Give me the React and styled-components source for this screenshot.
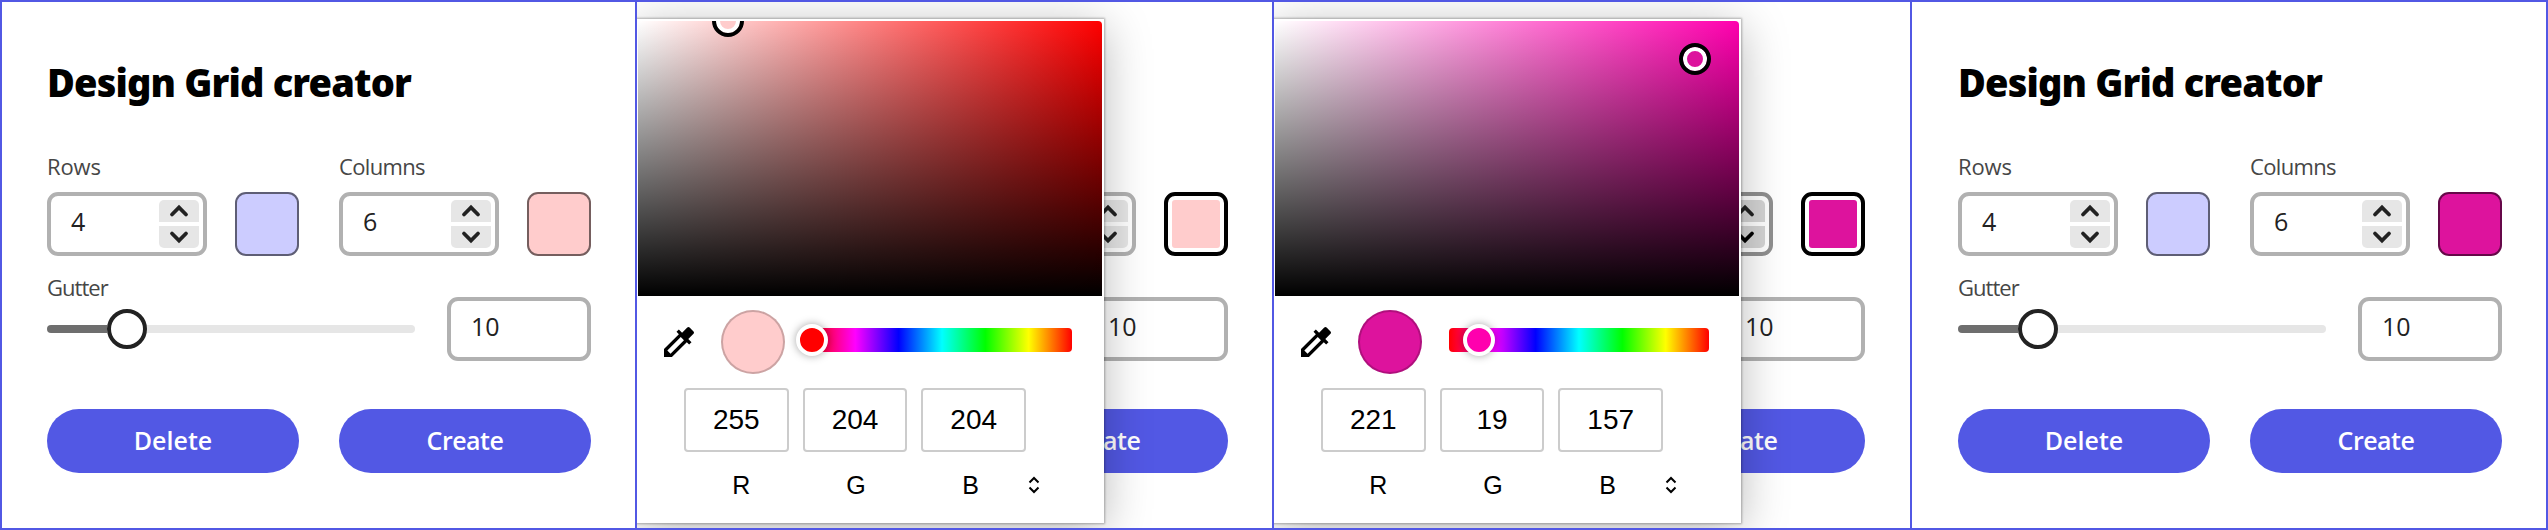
import React from "react";
import styled, { createGlobalStyle } from "styled-components";
import { MdColorize } from "react-icons/md";

const GlobalStyle = createGlobalStyle`
  *, *::before, *::after { box-sizing: border-box; }
  body {
    margin: 0;
    background: #fff;
    font-family: "Open Sans", "Noto Sans", sans-serif;
  }
`;

const Board = styled.main`
  display: grid;
  grid-template-columns: 635px 637px 638px 634px;
  width: 2548px;
  height: 530px;
  border: 2px solid #5258e4;
  background: #fff;
`;

const Panel = styled.section`
  position: relative;
  overflow: hidden;
  padding: 56px 0 0 ${(p) => p.$inset}px;
  border-right: 2px solid #5258e4;

  &:last-child {
    border-right: 0;
  }
`;

const Title = styled.h1`
  margin: 0 0 45px;
  font-family: "Noto Sans", "Open Sans", sans-serif;
  font-size: 38px;
  font-weight: 900;
  letter-spacing: -0.84px;
  line-height: 48px;
  color: #000;
  white-space: nowrap;
`;

const FieldRow = styled.div`
  display: flex;
  gap: 40px;
`;

const Field = styled.div`
  width: 252px;
`;

const Label = styled.div`
  font-size: 22px;
  letter-spacing: ${(p) => p.$tracking || 0}px;
  line-height: 30px;
  color: #464646;
`;

const FieldControls = styled.div`
  display: flex;
  justify-content: space-between;
  margin-top: 11px;
`;

const NumberBox = styled.div`
  display: flex;
  justify-content: space-between;
  align-items: center;
  width: ${(p) => p.$width}px;
  height: 64px;
  padding: 0 4px 0 20px;
  border: 4px solid ${(p) => (p.$hover ? "#909090" : "#b1b1b1")};
  border-radius: 11px;
  background: #fff;
`;

const NumberValue = styled.span`
  padding-bottom: 6px;
  font-size: 25px;
  line-height: 34px;
  color: #222;
`;

const Stepper = styled.div`
  display: flex;
  flex-direction: column;
  gap: 4px;
`;

const StepButton = styled.button`
  display: flex;
  align-items: center;
  justify-content: center;
  width: 40px;
  height: 22px;
  padding: 0;
  border: 0;
  border-radius: ${(p) => (p.$down ? "0 0 5px 5px" : "5px 5px 0 0")};
  background: ${(p) => (p.$hover ? "#d5d5d5" : "#e6e6e6")};
  color: ${(p) => (p.$hover && p.$down ? "#000" : "#222")};
`;

const Swatch = styled.div`
  width: 64px;
  height: 64px;
  border: 2px solid rgba(0, 0, 0, 0.54);
  border-radius: 11px;
  background: ${(p) => p.$color};
`;

const FocusedSwatch = styled.div`
  width: 64px;
  height: 64px;
  padding: 4px;
  border: 4px solid #000;
  border-radius: 11px;
  background: ${(p) => p.$color} content-box;
`;

const GutterRow = styled.div`
  display: flex;
  width: 544px;
  margin-top: 16px;
  justify-content: space-between;
`;

const GutterField = styled.div`
  width: 368px;
`;

const GutterBox = styled.div`
  padding-top: 25px;
`;

const Slider = styled.div`
  display: flex;
  align-items: center;
  height: 40px;
  margin-top: 7px;
`;

const SliderFill = styled.div`
  width: 60px;
  height: 8px;
  border-radius: 4px 0 0 4px;
  background: #6e6e6e;
`;

const SliderThumb = styled.div`
  width: 40px;
  height: 40px;
  border: 4px solid #222;
  border-radius: 50%;
  background: #fff;
`;

const SliderRest = styled.div`
  flex: 1;
  height: 8px;
  border-radius: 0 4px 4px 0;
  background: #e6e6e6;
`;

const Actions = styled.div`
  display: flex;
  gap: 40px;
  margin-top: 48px;
`;

const ActionButton = styled.button`
  width: 252px;
  height: 64px;
  padding: 0 0 2px;
  border: 0;
  border-radius: 32px;
  background: #5258e4;
  color: #fff;
  font-family: inherit;
  font-size: 25px;
  font-weight: 600;
  letter-spacing: ${(p) => p.$tracking || 0}px;
  line-height: 34px;
`;

const Popup = styled.div`
  position: absolute;
  top: 17px;
  left: -1px;
  width: 468px;
  height: 504px;
  padding: 2px;
  background: #fff;
  box-shadow: 0 0 2px 1px rgba(0, 0, 0, 0.28), 0 8px 44px rgba(0, 0, 0, 0.28);
  font-family: "Liberation Sans", Arial, sans-serif;
  color: #000;
`;

const ColorField = styled.div`
  position: relative;
  overflow: hidden;
  height: 275px;
  border-radius: 0 4px 0 0;
  background:
    linear-gradient(to top, #000, rgba(0, 0, 0, 0)),
    linear-gradient(to right, #fff, ${(p) => p.$hue});
`;

const FieldThumb = styled.div`
  position: absolute;
  left: ${(p) => p.$x - 16}px;
  top: ${(p) => p.$y - 16}px;
  width: 32px;
  height: 32px;
  border: 4px solid #000;
  border-radius: 50%;
  background: ${(p) => p.$color};
  box-shadow: inset 0 0 0 4px #fff;
`;

const PickerTools = styled.div`
  display: flex;
  align-items: center;
  gap: 27px;
  padding: 14px 0 14px 26px;
`;

const Dropper = styled.div`
  display: flex;
  align-items: center;
  justify-content: center;
  width: 30px;
  height: 30px;

  svg {
    flex: none;
  }
`;

const Preview = styled.div`
  width: 64px;
  height: 64px;
  border: 2px solid rgba(0, 0, 0, 0.2);
  border-radius: 50%;
  background: ${(p) => p.$color};
`;

const HueTrack = styled.div`
  position: relative;
  width: 260px;
  height: 24px;
  margin-bottom: 4px;
  border-radius: 4px;
  background: linear-gradient(to right, #f00, #f0f, #00f, #0ff, #0f0, #ff0, #f00);
`;

const HueThumb = styled.div`
  position: absolute;
  top: -4px;
  left: ${(p) => p.$x - 16}px;
  width: 32px;
  height: 32px;
  border: 4px solid #fff;
  border-radius: 50%;
  background: ${(p) => p.$hue};
  box-shadow: 0 0 8px rgba(0, 0, 0, 0.35);
`;

const ChannelBoxes = styled.div`
  display: flex;
  gap: 14px;
  width: 388px;
  padding-left: 46px;
`;

const ChannelBox = styled.div`
  flex: 1;
  height: 64px;
  border: 2px solid #ccc;
  border-radius: 4px;
  font-size: 28px;
  line-height: 59px;
  text-align: center;
`;

const ChannelNames = styled.div`
  display: flex;
  align-items: center;
  margin-top: 18px;
  padding-left: 46px;
`;

const ChannelName = styled.span`
  width: 114.67px;
  font-size: 25px;
  line-height: 30px;
  text-align: center;
`;

function Chevron({ down }) {
  return (
    <svg width="22" height="14" viewBox="0 0 22 14" fill="none">
      <path
        d={down ? "M4 3.5 L11 10.5 L18 3.5" : "M4 10.5 L11 3.5 L18 10.5"}
        stroke="currentColor"
        strokeWidth="3.8"
        strokeLinecap="round"
      />
    </svg>
  );
}

function Unfold() {
  return (
    <svg width="12" height="20" viewBox="0 0 12 20" fill="none">
      <path d="M1.5 7.5 L6 3 L10.5 7.5 M1.5 12.5 L6 17 L10.5 12.5" stroke="#000" strokeWidth="2" />
    </svg>
  );
}

function NumberField({ value, hover }) {
  return (
    <NumberBox $width={160} $hover={hover}>
      <NumberValue>{value}</NumberValue>
      <Stepper>
        <StepButton $hover={hover} aria-label="Increase">
          <Chevron />
        </StepButton>
        <StepButton $down $hover={hover} aria-label="Decrease">
          <Chevron down />
        </StepButton>
      </Stepper>
    </NumberBox>
  );
}

function ColorPicker({ rgb, hue, x, y, hueX }) {
  const color = `rgb(${rgb.join(",")})`;
  return (
    <Popup>
      <ColorField $hue={hue}>
        <FieldThumb $x={x} $y={y} $color={color} />
      </ColorField>
      <PickerTools>
        <Dropper>
          <MdColorize size={40} />
        </Dropper>
        <Preview $color={color} />
        <HueTrack>
          <HueThumb $x={hueX} $hue={hue} />
        </HueTrack>
      </PickerTools>
      <ChannelBoxes>
        {rgb.map((v, i) => (
          <ChannelBox key={i}>{v}</ChannelBox>
        ))}
      </ChannelBoxes>
      <ChannelNames>
        <ChannelName>R</ChannelName>
        <ChannelName>G</ChannelName>
        <ChannelName>B</ChannelName>
        <Unfold />
      </ChannelNames>
    </Popup>
  );
}

function GridCreator({ inset, columnColor, focused, hover, picker }) {
  return (
    <Panel $inset={inset}>
      <Title>Design Grid creator</Title>
      <FieldRow>
        <Field>
          <Label $tracking={-0.15}>Rows</Label>
          <FieldControls>
            <NumberField value={4} />
            <Swatch $color="#ccccff" />
          </FieldControls>
        </Field>
        <Field>
          <Label $tracking={-0.65}>Columns</Label>
          <FieldControls>
            <NumberField value={6} hover={hover} />
            {focused ? <FocusedSwatch $color={columnColor} /> : <Swatch $color={columnColor} />}
          </FieldControls>
        </Field>
      </FieldRow>
      <GutterRow>
        <GutterField>
          <Label $tracking={-0.95}>Gutter</Label>
          <Slider>
            <SliderFill />
            <SliderThumb />
            <SliderRest />
          </Slider>
        </GutterField>
        <GutterBox>
          <NumberBox $width={144}>
            <NumberValue>10</NumberValue>
          </NumberBox>
        </GutterBox>
      </GutterRow>
      <Actions>
        <ActionButton>Delete</ActionButton>
        <ActionButton $tracking={-0.5}>Create</ActionButton>
      </Actions>
      {picker && <ColorPicker {...picker} />}
    </Panel>
  );
}

const PINK = "#ffcccc";
const MAGENTA = "#dd139d";

export default function App() {
  return (
    <>
      <GlobalStyle />
      <Board>
        <GridCreator inset={45} columnColor={PINK} />
        <GridCreator
          inset={47}
          columnColor={PINK}
          focused
          picker={{ rgb: [255, 204, 204], hue: "#ff0000", x: 90, y: 0, hueX: 0 }}
        />
        <GridCreator
          inset={47}
          columnColor={MAGENTA}
          focused
          hover
          picker={{ rgb: [221, 19, 157], hue: "#ff00ae", x: 420, y: 38, hueX: 30 }}
        />
        <GridCreator inset={46} columnColor={MAGENTA} />
      </Board>
    </>
  );
}
